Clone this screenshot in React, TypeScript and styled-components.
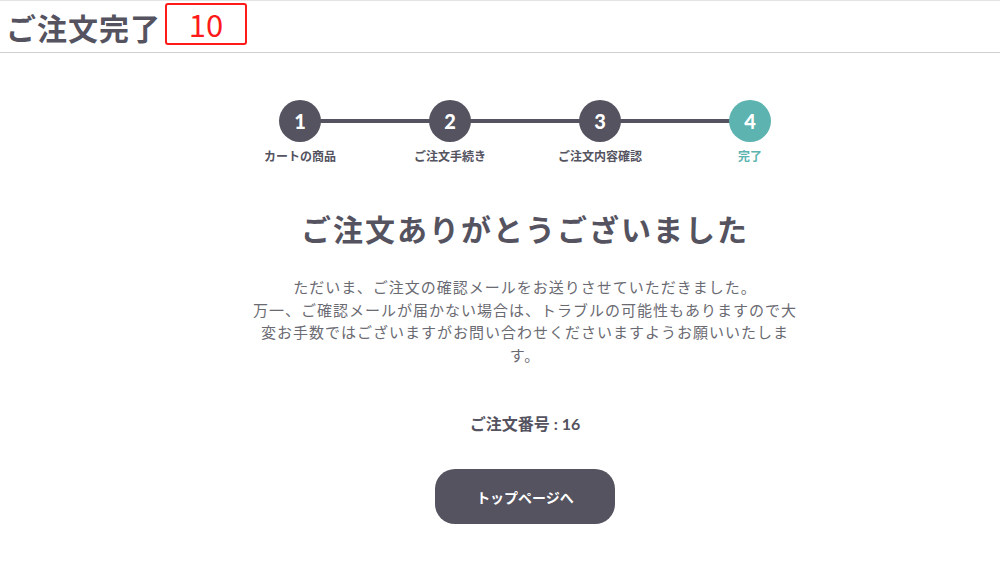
import React from "react";
import styled, { createGlobalStyle } from "styled-components";

const Global = createGlobalStyle`
  html, body { margin: 0; padding: 0; background: #fff; }
  body { font-family: Lato, "Noto Sans CJK JP", sans-serif; color: #54535f; }
`;

const Header = styled.header`
  height: 51px;
  border-top: 1px solid #e4e4e4;
  border-bottom: 1px solid #cfcfcf;
  display: flex;
  align-items: center;
  padding-left: 6px;
  gap: 4px;
`;

const PageTitle = styled.h1`
  margin: 0;
  font-family: "Noto Sans CJK JP", sans-serif;
  font-size: 30px;
  font-weight: 700;
  letter-spacing: 1px;
  line-height: 40px;
  color: #54535f;
`;

const Badge = styled.div`
  width: 78px;
  height: 38px;
  border: 2px solid #ff1a1a;
  border-radius: 3px;
  color: #ff1a1a;
  font-family: "Noto Sans CJK JP", sans-serif;
  font-size: 31px;
  line-height: 38px;
  text-align: center;
  margin-top: -5px;
`;

const Main = styled.main`
  display: flex;
  flex-direction: column;
  align-items: center;
  padding-left: 50px;
`;

const Stepper = styled.ol`
  list-style: none;
  margin: 47px 0 0;
  padding: 0;
  display: grid;
  grid-template-columns: repeat(4, 150px);
`;

const Step = styled.li<{ $last?: boolean }>`
  position: relative;
  display: flex;
  flex-direction: column;
  align-items: center;
  &::after {
    content: "";
    display: ${(p) => (p.$last ? "none" : "block")};
    position: absolute;
    left: 50%;
    width: 150px;
    top: 19px;
    height: 4px;
    background: #54535f;
  }
`;

const Circle = styled.div<{ $active?: boolean }>`
  position: relative;
  z-index: 1;
  width: 42px;
  height: 42px;
  border-radius: 50%;
  background: ${(p) => (p.$active ? "#5cb3b0" : "#54535f")};
  color: #fff;
  font-family: Lato, sans-serif;
  font-weight: 900;
  font-size: 20px;
  display: flex;
  align-items: center;
  justify-content: center;
`;

const StepLabel = styled.span<{ $active?: boolean }>`
  margin-top: 6px;
  font-family: "Noto Sans CJK JP", sans-serif;
  font-size: 12px;
  font-weight: 700;
  line-height: 16px;
  color: ${(p) => (p.$active ? "#5cb3b0" : "#54535f")};
`;

const Heading = styled.h2`
  margin: 44px 0 0;
  font-family: "Noto Sans CJK JP", sans-serif;
  font-size: 30px;
  font-weight: 700;
  letter-spacing: 2px;
  line-height: 40px;
  color: #54535f;
`;

const Message = styled.p`
  margin: 28px 0 0;
  width: 552px;
  text-align: center;
  font-family: "Noto Sans CJK JP", sans-serif;
  font-size: 15px;
  font-weight: 400;
  letter-spacing: 1px;
  line-height: 22.5px;
  color: #6a6a72;
`;

const OrderNo = styled.p`
  margin: 46px 0 0;
  font-family: Lato, "Noto Sans CJK JP", sans-serif;
  font-size: 16px;
  font-weight: 700;
  line-height: 24px;
  color: #54535f;
`;

const TopButton = styled.button`
  margin-top: 33px;
  width: 180px;
  height: 55px;
  border: none;
  border-radius: 20px;
  background: #54535f;
  color: #fff;
  font-family: "Noto Sans CJK JP", sans-serif;
  font-size: 14px;
  font-weight: 700;
  cursor: pointer;
`;

const steps = ["カートの商品", "ご注文手続き", "ご注文内容確認", "完了"];

export default function App() {
  return (
    <>
      <Global />
      <Header>
        <PageTitle>ご注文完了</PageTitle>
        <Badge>10</Badge>
      </Header>
      <Main>
        <Stepper>
          {steps.map((s, i) => {
            const active = i === steps.length - 1;
            return (
              <Step key={s} $last={active}>
                <Circle $active={active}>{i + 1}</Circle>
                <StepLabel $active={active}>{s}</StepLabel>
              </Step>
            );
          })}
        </Stepper>
        <Heading>ご注文ありがとうございました</Heading>
        <Message>
          ただいま、ご注文の確認メールをお送りさせていただきました。
          <br />
          万一、ご確認メールが届かない場合は、トラブルの可能性もありますので大変お手数ではございますがお問い合わせくださいますようお願いいたします。
        </Message>
        <OrderNo>ご注文番号 : 16</OrderNo>
        <TopButton>トップページへ</TopButton>
      </Main>
    </>
  );
}
